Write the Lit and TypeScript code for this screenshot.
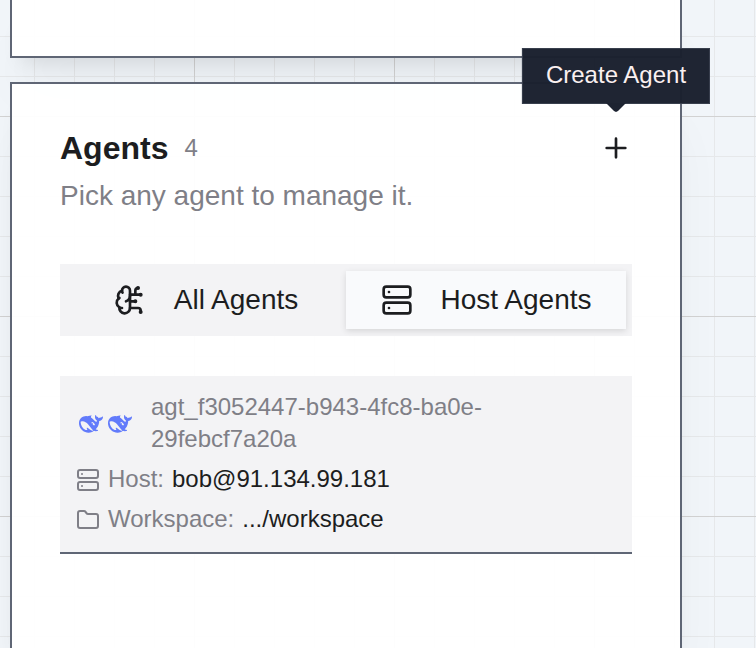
import { LitElement, html, css, svg } from "lit";
import { customElement, state } from "lit/decorators.js";

const serverIcon = svg`
  <rect x="2" y="2" width="20" height="8" rx="2" />
  <rect x="2" y="14" width="20" height="8" rx="2" />
  <path class="lamp" d="M6 6h.01M6 18h.01" />`;

const brainIcon = svg`
  <path d="M12 5a3 3 0 1 0-5.997.125 4 4 0 0 0-2.526 5.77 4 4 0 0 0 .556 6.588A4 4 0 1 0 12 18Z" />
  <path d="M9 13a4.5 4.5 0 0 0 3-4" />
  <path d="M6.003 5.125A3 3 0 0 0 6.401 6.5" />
  <path d="M3.477 10.896a4 4 0 0 1 .585-.396" />
  <path d="M6 18a4 4 0 0 1-1.967-.516" />
  <path d="M12 13h4M12 18h6a2 2 0 0 1 2 2v1M12 8h8M16 8V5a2 2 0 0 1 2-2" />
  <circle cx="16" cy="13" r=".5" />
  <circle cx="18" cy="3" r=".5" />
  <circle cx="20" cy="21" r=".5" />
  <circle cx="20" cy="8" r=".5" />`;

const whaleIcon = () => html`
  <svg class="whale" viewBox="0 0 24 24" aria-hidden="true">
    <path d="M23.748 4.482c-.254-.124-.364.113-.512.234-.051.039-.094.09-.137.136-.372.397-.806.657-1.373.626-.829-.046-1.537.214-2.163.848-.133-.782-.575-1.248-1.247-1.548-.352-.156-.708-.311-.955-.65-.172-.241-.219-.51-.305-.774-.055-.16-.11-.323-.293-.35-.2-.031-.278.136-.356.276-.313.572-.434 1.202-.422 1.84.027 1.436.633 2.58 1.838 3.393.137.093.172.187.129.323-.082.28-.18.552-.266.833-.055.179-.137.217-.329.14a5.526 5.526 0 01-1.736-1.18c-.857-.828-1.631-1.742-2.597-2.458a11.365 11.365 0 00-.689-.471c-.985-.957.13-1.743.388-1.836.27-.098.093-.432-.779-.428-.872.004-1.67.295-2.687.684a3.055 3.055 0 01-.465.137 9.597 9.597 0 00-2.883-.102c-1.885.21-3.39 1.102-4.497 2.623C.082 8.606-.231 10.684.152 12.85c.403 2.284 1.569 4.175 3.36 5.653 1.858 1.533 3.997 2.284 6.438 2.14 1.482-.085 3.133-.284 4.994-1.86.47.234.962.327 1.78.397.63.059 1.236-.03 1.705-.128.735-.156.684-.837.419-.961-2.155-1.004-1.682-.595-2.113-.926 1.096-1.296 2.746-2.642 3.392-7.003.05-.347.007-.565 0-.845-.004-.17.035-.237.23-.256a4.173 4.173 0 001.545-.475c1.396-.763 1.96-2.015 2.093-3.517.02-.23-.004-.467-.247-.588zM11.581 18c-2.089-1.642-3.102-2.183-3.52-2.16-.392.024-.321.471-.235.763.09.288.207.486.371.739.114.167.192.416-.113.603-.673.416-1.842-.14-1.897-.167-1.361-.802-2.5-1.86-3.301-3.307-.774-1.393-1.224-2.887-1.298-4.482-.02-.386.093-.522.477-.592a4.696 4.696 0 011.529-.039c2.132.312 3.946 1.265 5.468 2.774.868.86 1.525 1.887 2.202 2.891.72 1.066 1.494 2.082 2.48 2.914.348.292.625.514.891.677-.802.09-2.14.11-3.054-.614zm1-6.44a.306.306 0 01.415-.287.302.302 0 01.2.288.306.306 0 01-.31.307.303.303 0 01-.304-.308zm3.11 1.596c-.2.081-.399.151-.59.16a1.245 1.245 0 01-.798-.254c-.274-.23-.47-.358-.552-.758a1.73 1.73 0 01.016-.588c.07-.327-.008-.537-.239-.727-.187-.156-.426-.199-.688-.199a.559.559 0 01-.254-.078c-.11-.054-.2-.19-.114-.358.028-.054.16-.186.192-.21.356-.202.767-.136 1.146.016.352.144.618.408 1.001.782.391.451.462.576.685.914.176.265.336.537.445.848.067.195-.019.354-.25.452z" />
  </svg>`;

@customElement("app-root")
export class AppRoot extends LitElement {
  @state() private tab: "all" | "host" = "host";

  static styles = css`
    :host {
      display: flex;
      flex-direction: column;
      gap: 24px;
      box-sizing: border-box;
      height: 100vh;
      overflow: hidden;
      padding: 0 74px 0 10px;
      font-family: "Liberation Sans", Helvetica, Arial, sans-serif;
      font-size: 24px;
      line-height: 32px;
      color: #1c1d20;
      background-color: #f1f5f9;
      /* Fine 40px squares with a stronger line every fifth one. */
      background-image:
        linear-gradient(to right, #d2d2d2 1px, transparent 1px),
        linear-gradient(to bottom, #d2d2d2 1px, transparent 1px),
        linear-gradient(to right, #e6e8ea 1px, transparent 1px),
        linear-gradient(to bottom, #e6e8ea 1px, transparent 1px);
      background-size: 200px 200px, 200px 200px, 40px 40px, 40px 40px;
      background-position: 194px 0, 0 116px, 34px 0, 0 36px;
    }
    .panel {
      border: 2px solid #5f6675;
      background: rgba(255, 255, 255, 0.95);
      box-shadow: 0 40px 50px -10px rgba(0, 0, 0, 0.05),
        0 16px 20px -12px rgba(0, 0, 0, 0.1);
    }
    .previous {
      flex: none;
      height: 56px;
      border-top: none;
    }
    .agents {
      flex: 1 0 auto;
      border-bottom: none;
      padding: 40px 48px;
    }
    .head {
      display: flex;
      align-items: center;
      gap: 16px;
      height: 48px;
    }
    h2 {
      margin: 0;
      font-size: 32px;
      line-height: 40px;
      font-weight: 700;
    }
    .count,
    .intro,
    .muted {
      color: #7f7f87;
    }
    .intro {
      margin: 4px 0 48px;
      font-size: 28px;
      line-height: 40px;
    }
    button {
      font: inherit;
      color: inherit;
      border: none;
      padding: 0;
      background: none;
      cursor: pointer;
    }
    .create {
      position: relative;
      display: flex;
      margin-left: auto;
    }
    .tooltip {
      position: absolute;
      left: 50%;
      bottom: calc(100% + 28px);
      transform: translateX(-50%);
      box-sizing: border-box;
      padding: 9px 23px 11px;
      border: 1px solid #383f4d;
      background: rgba(27, 33, 47, 0.98);
      color: #faf0f0;
      line-height: 34px;
      white-space: nowrap;
    }
    .tooltip::after {
      content: "";
      position: absolute;
      left: 50%;
      top: 100%;
      width: 20px;
      height: 9px;
      transform: translateX(-50%);
      background: #1d2331;
      clip-path: polygon(0 0, 100% 0, 60% 88%, 50% 100%, 40% 88%);
    }
    svg {
      display: block;
      flex: none;
      fill: none;
      stroke: currentColor;
      stroke-width: 2;
      stroke-linecap: round;
      stroke-linejoin: round;
    }
    .large {
      width: 32px;
      height: 32px;
    }
    .small {
      width: 24px;
      height: 24px;
      color: #7f7f87;
    }
    .tabs {
      display: grid;
      grid-template-columns: 1fr 1fr;
      padding: 7px 6px;
      background: rgba(242, 242, 244, 0.95);
    }
    .tab {
      display: flex;
      align-items: center;
      justify-content: center;
      gap: 28px;
      height: 58px;
      font-size: 28px;
    }
    .tab[aria-selected="true"] {
      background: #f9fafc;
      box-shadow: 0 2px 6px rgba(0, 0, 0, 0.12);
    }
    .card {
      display: flex;
      flex-direction: column;
      gap: 8px;
      margin-top: 40px;
      padding: 15px 16px 17px;
      border-bottom: 2px solid #5f6675;
      background: rgba(242, 242, 244, 0.95);
    }
    .card svg {
      margin-top: 2px;
    }
    .identity {
      display: flex;
      align-items: center;
      gap: 16px;
    }
    .models {
      display: flex;
      gap: 5px;
      padding: 0 3px;
    }
    .whale {
      width: 24px;
      height: 24px;
      fill: #627bfb;
      stroke: none;
    }
    .id {
      max-width: 360px;
    }
    .row {
      display: flex;
      align-items: center;
      gap: 8px;
    }
    .pair {
      display: flex;
      gap: 8px;
    }
  `;

  private renderTab(id: "all" | "host", label: string, icon: unknown) {
    return html`<button
      class="tab"
      role="tab"
      aria-selected=${this.tab === id ? "true" : "false"}
      @click=${() => (this.tab = id)}
    >
      <svg class="large" viewBox="0 0 24 24" aria-hidden="true">${icon}</svg>
      <span>${label}</span>
    </button>`;
  }

  render() {
    return html`
      <section class="panel previous"></section>
      <section class="panel agents">
        <header class="head">
          <h2>Agents</h2>
          <span class="count">4</span>
          <button class="create" aria-labelledby="create-tip">
            <svg class="large" viewBox="0 0 24 24" aria-hidden="true">
              <path d="M5 12h14M12 5v14" />
            </svg>
            <span class="tooltip" id="create-tip" role="tooltip">Create Agent</span>
          </button>
        </header>
        <p class="intro">Pick any agent to manage it.</p>
        <div class="tabs" role="tablist">
          ${this.renderTab("all", "All Agents", brainIcon)}
          ${this.renderTab("host", "Host Agents", serverIcon)}
        </div>
        <article class="card">
          <div class="identity">
            <div class="models">${whaleIcon()}${whaleIcon()}</div>
            <span class="id muted">agt_f3052447-b943-4fc8-ba0e-29febcf7a20a</span>
          </div>
          <div class="row">
            <svg class="small" viewBox="0 0 24 24" aria-hidden="true">${serverIcon}</svg>
            <span class="pair"><span class="muted">Host:</span><span>bob@91.134.99.181</span></span>
          </div>
          <div class="row">
            <svg class="small" viewBox="0 0 24 24" aria-hidden="true">
              <path d="M20 20a2 2 0 0 0 2-2V8a2 2 0 0 0-2-2h-7.900a2 2 0 0 1-1.690-.900L9.600 3.900A2 2 0 0 0 7.930 3H4a2 2 0 0 0-2 2v13a2 2 0 0 0 2 2Z" />
            </svg>
            <span class="pair"><span class="muted">Workspace:</span><span>.../workspace</span></span>
          </div>
        </article>
      </section>
    `;
  }
}
